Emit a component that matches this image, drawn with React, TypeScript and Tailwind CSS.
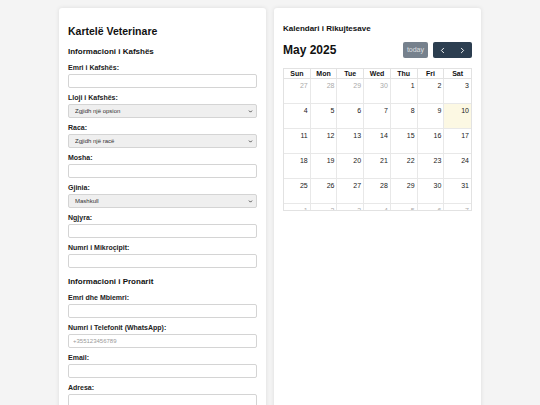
import { ChevronLeft, ChevronRight, ChevronDown } from 'lucide-react';

type Cell = { day: number; muted?: boolean; today?: boolean };

const weekDays = ['Sun', 'Mon', 'Tue', 'Wed', 'Thu', 'Fri', 'Sat'];

const weeks: Cell[][] = [
  [{ day: 27, muted: true }, { day: 28, muted: true }, { day: 29, muted: true }, { day: 30, muted: true }, { day: 1 }, { day: 2 }, { day: 3 }],
  [{ day: 4 }, { day: 5 }, { day: 6 }, { day: 7 }, { day: 8 }, { day: 9 }, { day: 10, today: true }],
  [{ day: 11 }, { day: 12 }, { day: 13 }, { day: 14 }, { day: 15 }, { day: 16 }, { day: 17 }],
  [{ day: 18 }, { day: 19 }, { day: 20 }, { day: 21 }, { day: 22 }, { day: 23 }, { day: 24 }],
  [{ day: 25 }, { day: 26 }, { day: 27 }, { day: 28 }, { day: 29 }, { day: 30 }, { day: 31 }],
  [{ day: 1, muted: true }, { day: 2, muted: true }, { day: 3, muted: true }, { day: 4, muted: true }, { day: 5, muted: true }, { day: 6, muted: true }, { day: 7, muted: true }],
];

function Field({ label, children }: { label: string; children: React.ReactNode }) {
  return (
    <div className="mb-[5px]">
      <label className="block text-[7px] leading-[10px] font-bold text-[#222] mb-px">{label}</label>
      {children}
    </div>
  );
}

function TextInput({ placeholder }: { placeholder?: string }) {
  return (
    <input
      placeholder={placeholder}
      className="block w-full h-[14px] px-[4px] text-[6px] bg-white border border-[#d4d4d4] rounded-[2px] placeholder:text-[#9a9a9a] outline-none"
    />
  );
}

function Select({ value }: { value: string }) {
  return (
    <div className="relative">
      <select
        defaultValue={value}
        className="block w-full h-[14px] pl-[6px] text-[6px] leading-[12px] text-[#333] bg-[#efefef] border border-[#d4d4d4] rounded-[2px] outline-none appearance-none"
      >
        <option>{value}</option>
      </select>
      <ChevronDown size={5} strokeWidth={4} className="absolute right-[4px] top-[5px] text-[#333] pointer-events-none" />
    </div>
  );
}

export default function App() {
  return (
    <div className="min-h-screen bg-[#f4f4f4] font-['Liberation_Sans',Arial,sans-serif] text-[#111]">
      <div className="w-[422px] mx-auto pt-[8px] grid grid-cols-2 gap-[8px]">
        {/* Pet card form */}
        <div className="bg-white rounded-[3px] shadow-[0_0_4px_rgba(0,0,0,0.1)] px-[9px] pt-[17px] pb-[20px]">
          <h1 className="text-[10.5px] leading-[12px] font-bold mb-[10px]">Kartelë Veterinare</h1>
          <h2 className="text-[8px] leading-[10px] font-bold mb-[6px]">Informacioni i Kafshës</h2>
          <Field label="Emri i Kafshës:"><TextInput /></Field>
          <Field label="Lloji i Kafshës:"><Select value="Zgjidh një opsion" /></Field>
          <Field label="Raca:"><Select value="Zgjidh një racë" /></Field>
          <Field label="Mosha:"><TextInput /></Field>
          <Field label="Gjinia:"><Select value="Mashkull" /></Field>
          <Field label="Ngjyra:"><TextInput /></Field>
          <Field label="Numri i Mikroçipit:"><TextInput /></Field>

          <h2 className="text-[8px] leading-[10px] font-bold mt-[9px] mb-[6px]">Informacioni i Pronarit</h2>
          <Field label="Emri dhe Mbiemri:"><TextInput /></Field>
          <Field label="Numri i Telefonit (WhatsApp):"><TextInput placeholder="+355123456789" /></Field>
          <Field label="Email:"><TextInput /></Field>
          <Field label="Adresa:"><TextInput /></Field>
        </div>

        {/* Reminder calendar */}
        <div className="bg-white rounded-[3px] shadow-[0_0_4px_rgba(0,0,0,0.1)] px-[9px] pt-[16px]">
          <h2 className="text-[8px] leading-[10px] font-bold mb-[8px]">Kalendari i Rikujtesave</h2>
          <div className="flex items-center justify-between mb-[10px]">
            <span className="text-[12px] leading-[16px] font-bold">May 2025</span>
            <div className="flex items-center gap-[5px]">
              <button className="h-[16px] px-[4px] rounded-[2px] bg-[#76818d] text-white/75 text-[7px]">today</button>
              <div className="flex h-[16px] rounded-[2px] bg-[#2c3e50] text-white overflow-hidden">
                <button className="w-[19.5px] flex items-center justify-center"><ChevronLeft size={9} strokeWidth={2.5} /></button>
                <button className="w-[19.5px] flex items-center justify-center"><ChevronRight size={9} strokeWidth={2.5} /></button>
              </div>
            </div>
          </div>

          <div className="border border-[#e2e2e2]">
            <div className="grid grid-cols-7 h-[10px] border-b border-[#e2e2e2]">
              {weekDays.map((d, i) => (
                <div key={d} className={`text-center text-[7px] leading-[9px] font-bold ${i < 6 ? 'border-r border-[#e2e2e2]' : ''}`}>{d}</div>
              ))}
            </div>
            <div className="h-[131px] overflow-hidden">
              {weeks.map((week, w) => (
                <div key={w} className="grid grid-cols-7 h-[25px] border-b border-[#e8e8e8]">
                  {week.map((c, i) => (
                    <div
                      key={i}
                      className={`text-right pr-[2px] pt-[2px] text-[7px] leading-[9px] ${c.muted ? 'text-[#aaa]' : 'text-[#222]'} ${c.today ? 'bg-[#fcf8e3]' : ''} ${i < 6 ? 'border-r border-[#e8e8e8]' : ''}`}
                    >
                      {c.day}
                    </div>
                  ))}
                </div>
              ))}
            </div>
          </div>
        </div>
      </div>
    </div>
  );
}
